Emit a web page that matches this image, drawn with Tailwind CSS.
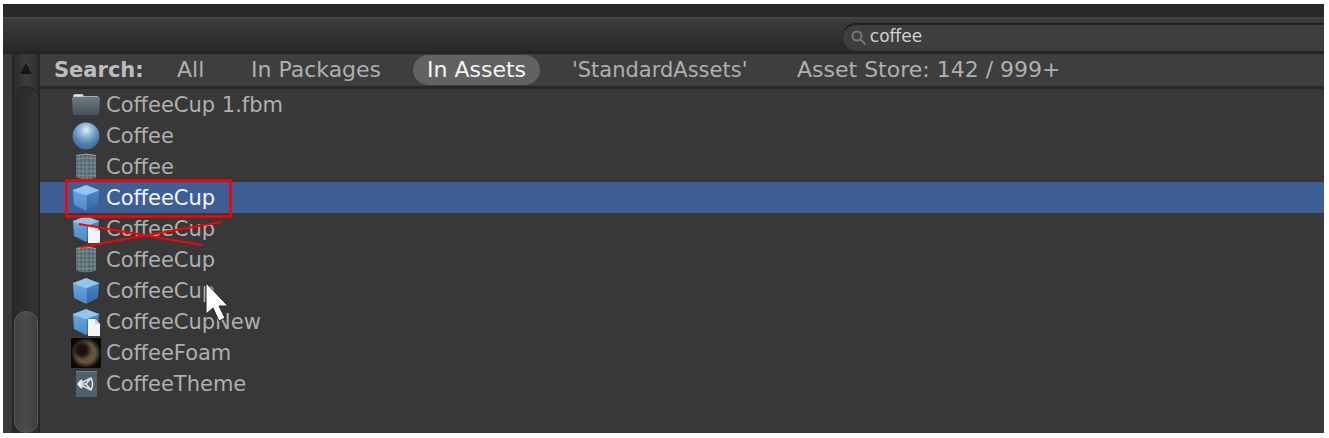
<!DOCTYPE html>
<html lang="en">
<head>
<meta charset="utf-8">
<title>Project search</title>
<script src="https://cdn.jsdelivr.net/npm/@tailwindcss/browser@4"></script>
</head>
<body class="bg-white">
<svg class="absolute size-0" aria-hidden="true">
  <defs>
    <linearGradient id="folderFill" x1="0" y1="0" x2="0" y2="1"><stop offset="0" stop-color="#6c7a82"/><stop offset="1" stop-color="#46535a"/></linearGradient>
    <radialGradient id="ballFill" cx=".5" cy=".28" r=".7"><stop offset="0" stop-color="#e4f1f8"/><stop offset=".35" stop-color="#8db5d4"/><stop offset=".75" stop-color="#4c7daf"/><stop offset="1" stop-color="#426c98"/></radialGradient>
    <linearGradient id="cubeLeft" x1="0" y1="0" x2="0" y2="1"><stop offset="0" stop-color="#69a7e3"/><stop offset="1" stop-color="#4b87c6"/></linearGradient>
    <linearGradient id="cubeRight" x1="0" y1="0" x2="0" y2="1"><stop offset="0" stop-color="#4c86c8"/><stop offset="1" stop-color="#3469a6"/></linearGradient>
    <radialGradient id="foamFill"><stop offset="0" stop-color="#604d39"/><stop offset=".65" stop-color="#665540"/><stop offset="1" stop-color="#0e0b08"/></radialGradient>
    <radialGradient id="foamShade"><stop offset="0" stop-color="#120e0a"/><stop offset=".5" stop-color="#1c150f"/><stop offset="1" stop-color="#1c150f" stop-opacity="0"/></radialGradient>
    <symbol id="folder" viewBox="0 0 31 30">
      <path d="M3 7V6q0-2 2-2h7q2 0 2 2h13q2 0 2 2v4H3z" fill="#a9b0b3"/>
      <path d="M4 5.500q0-1 1-1h7l1 2H4z" fill="#e1e4e4"/>
      <path d="M2 9q0-2 2-2h24q2 0 2 2l-1 15q0 1-2 1H5q-2 0-2-1z" fill="url(#folderFill)"/>
    </symbol>
    <symbol id="ball" viewBox="0 0 31 30"><circle cx="16" cy="15" r="13.500" fill="url(#ballFill)"/></symbol>
    <symbol id="mesh" viewBox="0 0 31 30">
      <path d="M6 3.500q10-3 20 0v22q-10 4-20 0z" fill="#57676f"/>
      <path d="M6 7q10-2 20 0M6 11h20M6 15h20M6 19h20M6 23q10 2 20 0M9 3v23M13 2v25M17 2v25M21 2v25M25 3v23" fill="none" stroke="#84949b" stroke-width=".8"/>
      <path d="M6 3.500q10-3 20 0" fill="none" stroke="#93a0a5" stroke-width="1"/>
    </symbol>
    <symbol id="cube" viewBox="0 0 31 30">
      <path d="M3 7l13 5v16L4 22z" fill="url(#cubeLeft)"/>
      <path d="M29 7l-13 5v16l12-6z" fill="url(#cubeRight)"/>
      <path d="M3 7l13-5 13 5-13 5z" fill="#8fc6f2"/>
      <path d="M3 7l13 5 13-5" fill="none" stroke="#9dcbf0" stroke-width=".8"/>
      <path d="M16 12v15" stroke="#78aee2" stroke-width=".6"/>
    </symbol>
    <symbol id="model" viewBox="0 0 31 30">
      <use href="#cube"/>
      <path d="M18 12h7l5 5v12H18z" fill="#f1f5f8"/>
      <path d="M25 12v5h5z" fill="#cad5df"/>
    </symbol>
    <symbol id="foam" viewBox="0 0 31 30">
      <path d="M1 0h30v30H1z" fill="#0a0806"/>
      <circle cx="16" cy="15" r="15" fill="url(#foamFill)"/>
      <circle cx="12" cy="12" r="10" fill="url(#foamShade)"/>
    </symbol>
    <symbol id="scene" viewBox="0 0 31 30">
      <path d="M6 2h21v26H6z" fill="#4f616c"/><path d="M6 2h21v1H6z" fill="#71818a"/>
      <path d="M9 15l12-6q3 6 0 12zM9 15h7M16 15l5-6M16 15l5 6" fill="none" stroke="#dce2e4" stroke-width="1.600"/>
      <path d="M8 15l4-4M8 15l4 4" stroke="#eef1f2" stroke-width="1.800"/>
    </symbol>
  </defs>
</svg>
<div class="min-h-screen pt-1 pr-[5px] pb-[5px] pl-[3px] flex flex-col font-['DejaVu_Sans',sans-serif] text-[21px] leading-[30px] text-[#afafaf]">
  <main class="grow flex flex-col bg-[#383838] overflow-hidden">
    <div class="h-[13px] bg-[#282828]"></div>
    <header class="h-[37px] flex justify-end border-t-2 border-b-3 border-t-[#444444] border-b-[#242424] bg-linear-to-b from-[#3c3c3c] to-[#292929]">
      <label class="w-[36.5%] h-7 mt-1 flex items-center gap-[3px] pl-2 rounded-l-full border-t-2 border-l border-t-[#202020] border-l-[#2a2a2a] bg-[#3e3e3e]">
        <svg class="size-4 shrink-0" viewBox="0 0 16 16" fill="none" stroke="#777" stroke-width="2" aria-hidden="true"><circle cx="6" cy="6" r="4.500"/><path d="M9.500 9.500l5 5"/></svg>
        <input type="text" value="coffee" aria-label="Search assets" class="grow min-w-0 h-5 -mt-1 bg-transparent text-[17px] leading-5 text-[#d0d0d0] outline-none">
      </label>
    </header>
    <div class="grow flex">
      <div class="w-[9px] bg-[#3a3a3a]"></div>
      <div class="w-7 flex flex-col border-l-2 border-r-2 border-[#262626] bg-[#303030]">
        <button type="button" aria-label="Scroll up" class="h-9 w-full shrink-0 flex justify-center items-start pt-2 bg-linear-to-r from-[#2b2b2b] via-[#3c3c3c] to-[#303030]">
          <svg class="w-4 h-3" viewBox="0 0 16 12" aria-hidden="true"><path d="M2 12L8 1l6 11z" fill="#171717"/></svg>
        </button>
        <div class="grow flex flex-col justify-end -mt-1 rounded-t-full border-t-2 border-[#262626] bg-linear-to-r from-[#292929] to-[#333333]">
          <div class="h-[122px] rounded-full border border-[#595959] bg-linear-to-r from-[#414141] via-[#4b4b4b] to-[#3d3d3d]"></div>
        </div>
      </div>
      <section class="grow min-w-0">
        <nav class="h-[35px] flex items-center pl-3.5 border-b-3 border-[#272727] bg-[#3e3e3e] text-[22px] whitespace-nowrap">
          <strong class="w-[109px] text-[21px] text-[#bdbdbd]">Search:</strong>
          <button type="button" class="w-[60px] px-3.5 text-left">All</button>
          <button type="button" class="w-[190px] pl-7 text-left">In Packages</button>
          <button type="button" class="w-[127px] h-[30px] rounded-full bg-[#626262] text-[#f5f5f5]">In Assets</button>
          <button type="button" class="w-[245px] pl-8 text-left text-[21px]">'StandardAssets'</button>
          <button type="button" class="pl-3 text-left">Asset Store: 142 / 999+</button>
        </nav>
        <ul class="relative">
          <li class="h-[31px] flex items-center gap-[5px] pl-[30px]"><svg class="w-[31px] h-[30px]" aria-hidden="true"><use href="#folder"/></svg>CoffeeCup 1.fbm</li>
          <li class="h-[31px] flex items-center gap-[5px] pl-[30px]"><svg class="w-[31px] h-[30px]" aria-hidden="true"><use href="#ball"/></svg>Coffee</li>
          <li class="h-[31px] flex items-center gap-[5px] pl-[30px]"><svg class="w-[31px] h-[30px]" aria-hidden="true"><use href="#mesh"/></svg>Coffee</li>
          <li class="h-[31px] flex items-center gap-[5px] pl-[30px] bg-[#3e5f96] text-[#f4f7fb]"><svg class="w-[31px] h-[30px]" aria-hidden="true"><use href="#cube"/></svg>CoffeeCup</li>
          <li class="h-[31px] flex items-center gap-[5px] pl-[30px]"><svg class="w-[31px] h-[30px]" aria-hidden="true"><use href="#model"/></svg>CoffeeCup</li>
          <li class="h-[31px] flex items-center gap-[5px] pl-[30px]"><svg class="w-[31px] h-[30px]" aria-hidden="true"><use href="#mesh"/></svg>CoffeeCup</li>
          <li class="h-[31px] flex items-center gap-[5px] pl-[30px]"><svg class="w-[31px] h-[30px]" aria-hidden="true"><use href="#cube"/></svg>CoffeeCup</li>
          <li class="h-[31px] flex items-center gap-[5px] pl-[30px]"><svg class="w-[31px] h-[30px]" aria-hidden="true"><use href="#model"/></svg>CoffeeCupNew</li>
          <li class="h-[31px] flex items-center gap-[5px] pl-[30px]"><svg class="w-[31px] h-[30px]" aria-hidden="true"><use href="#foam"/></svg>CoffeeFoam</li>
          <li class="h-[31px] flex items-center gap-[5px] pl-[30px]"><svg class="w-[31px] h-[30px]" aria-hidden="true"><use href="#scene"/></svg>CoffeeTheme</li>
          <!-- Annotations and pointer over the list -->
          <li class="absolute left-0 top-0 pointer-events-none" aria-hidden="true">
            <svg class="w-[220px] h-[250px]" viewBox="0 0 220 250">
              <g fill="none" stroke="#f00"><rect x="26.500" y="91.500" width="164" height="36" stroke-width="2.500"/><path d="M39 135l123 21M41 158l140-25" stroke-width="2"/></g>
              <path d="M166 194v31l7-6 6 13 6-3-6-12h9z" fill="#fff" stroke="#222" stroke-width="1"/>
            </svg>
          </li>
        </ul>
      </section>
    </div>
  </main>
</div>
</body>
</html>
